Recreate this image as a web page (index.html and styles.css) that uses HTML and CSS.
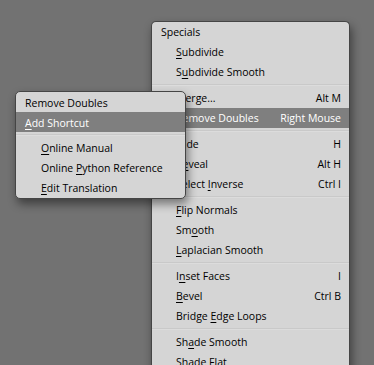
FILE: index.html
```html
<!DOCTYPE html>
<html lang="en">
<head>
    <meta charset="UTF-8">
    <title>Specials</title>
    <link rel="stylesheet" href="styles.css">
</head>
<body>
    <div class="viewport">
        <!-- Specials menu -->
        <div class="menu specials">
            <div class="row title">Specials</div>
            <div class="row item"><span><u>S</u>ubdivide</span></div>
            <div class="row item"><span>S<u>u</u>bdivide Smooth</span></div>
            <div class="sep"></div>
            <div class="row item"><span><u>M</u>erge...</span><span class="key">Alt M</span></div>
            <div class="row item active"><span><u>R</u>emove Doubles</span><span class="key">Right Mouse</span></div>
            <div class="sep"></div>
            <div class="row item"><span><u>H</u>ide</span><span class="key">H</span></div>
            <div class="row item"><span>R<u>e</u>veal</span><span class="key">Alt H</span></div>
            <div class="row item"><span>Select <u>I</u>nverse</span><span class="key">Ctrl I</span></div>
            <div class="sep"></div>
            <div class="row item"><span><u>F</u>lip Normals</span></div>
            <div class="row item"><span>Sm<u>o</u>oth</span></div>
            <div class="row item"><span><u>L</u>aplacian Smooth</span></div>
            <div class="sep"></div>
            <div class="row item"><span>I<u>n</u>set Faces</span><span class="key">I</span></div>
            <div class="row item"><span><u>B</u>evel</span><span class="key">Ctrl B</span></div>
            <div class="row item"><span>Bridge <u>E</u>dge Loops</span></div>
            <div class="sep"></div>
            <div class="row item"><span>Sh<u>a</u>de Smooth</span></div>
            <div class="row item"><span>Shade F<u>l</u>at</span></div>
        </div>

        <!-- right click popup -->
        <div class="menu popup">
            <div class="row title">Remove Doubles</div>
            <div class="row title active"><span><u>A</u>dd Shortcut</span></div>
            <div class="sep"></div>
            <div class="row item"><span><u>O</u>nline Manual</span></div>
            <div class="row item"><span>Online <u>P</u>ython Reference</span></div>
            <div class="row item"><span><u>E</u>dit Translation</span></div>
        </div>
    </div>
</body>
</html>
```

FILE: styles.css
```css
* {
    box-sizing: border-box;
    margin: 0;
    padding: 0;
}

body {
    background: #727272;
    font-family: 'Open Sans', 'Noto Sans', sans-serif;
    font-size: 10.5px;
    color: #000;
    overflow: hidden;
}

.viewport {
    position: relative;
    width: 374px;
    height: 365px;
}

.menu {
    position: absolute;
    background: #d5d5d5;
    border: 1px solid #454545;
    border-radius: 5px;
    box-shadow: 2px 5px 10px rgba(0, 0, 0, 0.45);
}

.specials {
    left: 151px;
    top: 21px;
    width: 199px;
    border-bottom: none;
    border-radius: 5px 5px 0 0;
}

.popup {
    left: 15px;
    top: 91px;
    width: 171px;
}

.row {
    height: 20px;
    display: flex;
    align-items: center;
    justify-content: space-between;
    white-space: nowrap;
    padding-right: 8px;
}

.title {
    padding-left: 9px;
}

.popup .title {
    padding-top: 1px;
}

.item {
    padding-left: 24px;
}

.popup .item {
    padding-left: 25px;
}

.active {
    background: #7f7f7f;
    color: #fff;
}

u {
    text-decoration-thickness: 1px;
    text-underline-offset: 2px;
}

.sep {
    height: 6px;
    padding-top: 2px;
}

.sep::after {
    content: "";
    display: block;
    height: 1px;
    background: #c9c9c9;
    border-bottom: 1px solid #dcdcdc;
}
```
